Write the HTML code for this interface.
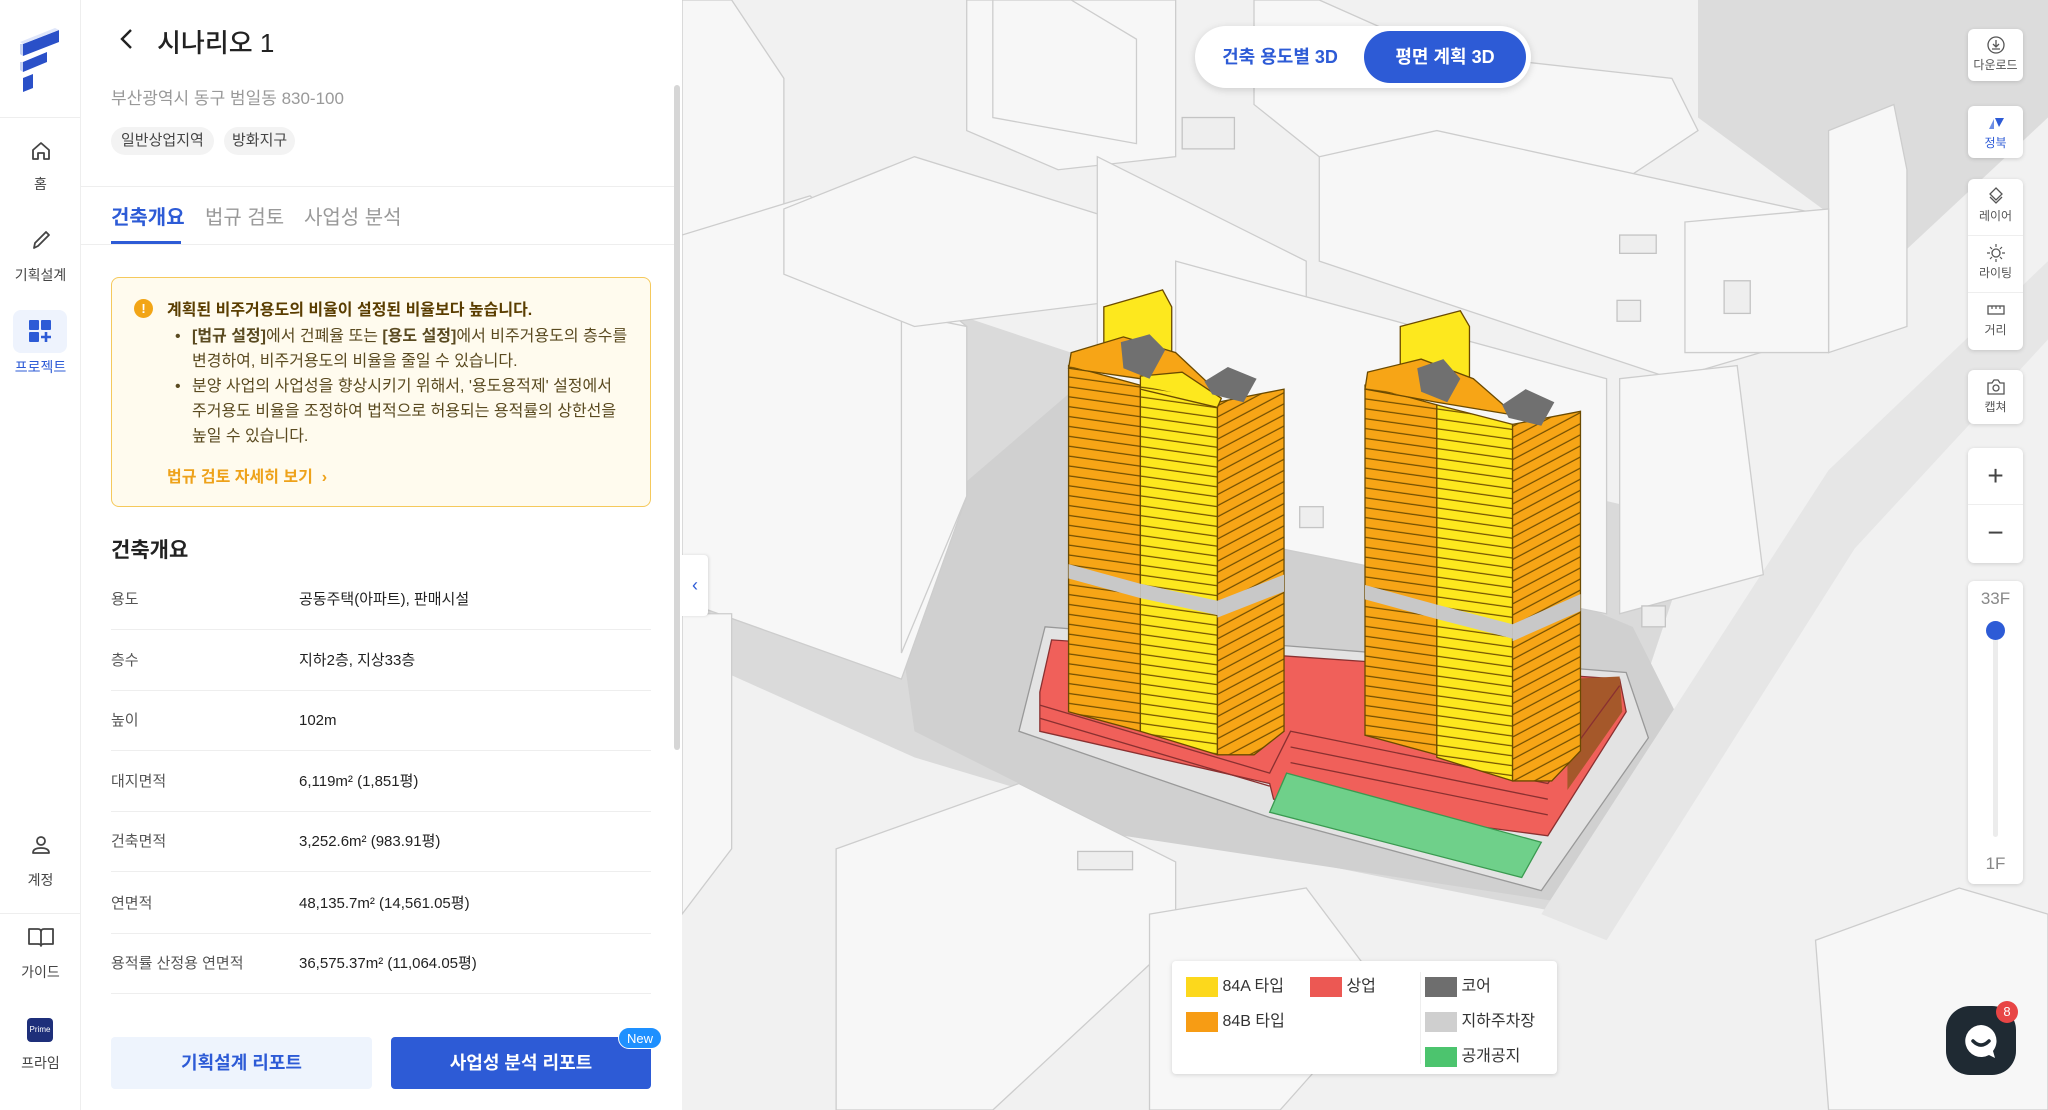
<!DOCTYPE html>
<html><head><meta charset="utf-8"><style>
*{box-sizing:border-box;margin:0;padding:0}
body{width:2048px;height:1110px;overflow:hidden;position:relative;font-family:"Liberation Sans","Noto Sans CJK KR",sans-serif;background:#fff;color:#222}
.abs{position:absolute}
.side{left:0;top:0;width:81px;height:1110px;background:#fff;border-right:1px solid #eee}
.nav{position:absolute;left:0;width:81px;text-align:center;font-size:14px;color:#444}
.panel{left:81px;top:0;width:601px;height:1110px;background:#fff}
.row{position:absolute;left:111px;width:540px;height:40px;border-bottom:1px solid #eee;font-size:15px}
.row .l{position:absolute;left:0;top:0;line-height:20px;color:#555}
.row .v{position:absolute;left:188px;top:0;line-height:20px;color:#222}
.tb{position:absolute;left:1968px;width:55px;background:#fff;border-radius:6px;box-shadow:0 1px 4px rgba(0,0,0,.15);text-align:center;font-size:12px;color:#555}
.leg{font-size:16px;color:#333}
.sw{display:inline-block;width:32px;height:20px;vertical-align:middle}
</style></head><body>

<!-- MAP -->
<svg class="abs" style="left:682px;top:0" width="1366" height="1110" viewBox="522 0 1046 850">
<rect x="522" y="0" width="1046" height="850" fill="#f1f1f1"/>
<polygon points="522,250 700,230 1000,330 1300,400 1200,700 900,640 700,580 522,500" fill="#dadada"/>
<polygon points="680,420 820,300 1250,480 1290,560 1190,690 860,640 700,560" fill="#d0d0d0"/>
<polygon points="1300,0 1568,0 1568,90 1450,200 1300,90" fill="#dcdcdc"/>
<polygon points="1180,700 1400,360 1568,200 1568,260 1420,420 1230,720" fill="#e6e6e6"/>
<g fill="#f7f7f7" stroke="#cdcdcd" stroke-width="1">
<polygon points="522,0 560,0 600,60 600,180 522,220"/>
<polygon points="522,180 620,150 740,250 740,380 690,520 522,460"/>
<polygon points="690,240 740,250 740,380 690,500"/>
<polygon points="600,160 700,120 860,170 860,230 700,250 600,210"/>
<polygon points="740,0 900,0 900,120 810,130 740,100"/>
<polygon points="960,0 1010,0 1100,40 1280,60 1300,100 1240,140 1010,120 960,80"/>
<polygon points="1010,120 1100,100 1420,170 1450,240 1280,290 1010,200"/>
<polygon points="840,120 1000,200 1000,350 860,380 840,300"/>
<polygon points="900,200 1230,290 1230,470 980,420 900,360"/>
<polygon points="1240,290 1330,280 1350,440 1240,470"/>
<polygon points="1400,100 1450,80 1460,130 1460,250 1400,270"/>
<polygon points="1290,170 1400,160 1400,270 1290,270"/>
<polygon points="522,470 560,470 560,650 522,700"/>
<polygon points="640,650 780,600 900,660 900,720 760,850 640,850"/>
<polygon points="880,700 1000,680 1060,760 980,850 880,850"/>
<polygon points="1390,720 1500,680 1568,700 1568,850 1400,850"/>
<polygon points="760,0 820,0 870,30 870,110 760,90"/>
</g>
<g fill="#eeeeee" stroke="#c4c4c4">
<rect x="1240" y="180" width="28" height="14"/><rect x="1238" y="230" width="18" height="16"/>
<rect x="1320" y="215" width="20" height="25"/><rect x="995" y="388" width="18" height="16"/>
<rect x="1257" y="464" width="18" height="16"/><rect x="825" y="652" width="42" height="14"/>
<rect x="905" y="90" width="40" height="24"/>
</g>
<polygon points="780,560 800,480 1245,515 1262,565 1180,682 972,626" fill="#e3e3e3" stroke="#999"/>
<polygon points="796,530 805,490 1240,520 1245,545 1185,640 975,612 972,600 796,560" fill="#f0605a" stroke="#8a3030" stroke-width="1"/>
<polygon points="1200,520 1240,518 1242,545 1200,605" fill="#a5582a"/>
<g stroke="#8a3030" stroke-width="1" fill="none">
<polyline points="796,540 972,592 988,560 1185,600 1240,525"/>
<polyline points="796,550 972,602"/><polyline points="988,572 1185,612"/><polyline points="988,584 1185,624"/>
</g>
<polygon points="985,592 1180,645 1165,672 972,622" fill="#6fd08a" stroke="#3a9a50"/>
<defs>
<pattern id="st" width="10" height="7.5" patternUnits="userSpaceOnUse" patternTransform="rotate(8)"><line x1="0" y1="7" x2="10" y2="7" stroke="#6b4a00" stroke-width="0.9"/></pattern>
<pattern id="st2" width="10" height="7.5" patternUnits="userSpaceOnUse" patternTransform="rotate(-28)"><line x1="0" y1="7" x2="10" y2="7" stroke="#6b4a00" stroke-width="0.9"/></pattern>
</defs>
<g stroke="#6b4a00" stroke-width="1">
<polygon points="818,280 873,295 873,560 818,545" fill="#f7a516"/>
<polygon points="873,295 932,308 932,578 873,560" fill="#fde81e"/>
<polygon points="932,308 983,298 983,560 960,578 932,578" fill="#f7a516"/>
<polygon points="845,235 890,222 897,235 897,290 845,275" fill="#fde81e"/>
<polygon points="820,270 860,258 900,270 932,300 873,290 818,282" fill="#f7a516"/>
<polygon points="873,288 905,285 935,305 932,312 873,298" fill="#fde81e"/>
</g>
<polygon points="818,280 873,295 873,560 818,545" fill="url(#st)"/>
<polygon points="873,295 932,308 932,578 873,560" fill="url(#st)"/>
<polygon points="932,308 983,298 983,560 960,578 932,578" fill="url(#st2)"/>
<polygon points="818,432 873,447 873,458 818,443" fill="#c8c8c8"/><polygon points="873,447 932,460 932,471 873,458" fill="#c8c8c8"/><polygon points="932,460 983,440 983,453 932,473" fill="#c8c8c8"/>
<polygon points="858,262 880,256 892,268 880,290 860,282" fill="#707070"/>
<polygon points="922,292 940,281 962,290 952,308 928,302" fill="#707070"/>
<g stroke="#6b4a00" stroke-width="1">
<polygon points="1045,295 1100,310 1100,578 1045,563" fill="#f7a516"/>
<polygon points="1100,310 1158,325 1158,598 1100,580" fill="#fde81e"/>
<polygon points="1158,325 1210,315 1210,575 1188,598 1158,598" fill="#f7a516"/>
<polygon points="1072,250 1118,238 1125,250 1125,305 1072,290" fill="#fde81e"/>
<polygon points="1047,285 1088,275 1128,290 1160,318 1100,308 1045,298" fill="#f7a516"/>
</g>
<polygon points="1045,295 1100,310 1100,578 1045,563" fill="url(#st)"/>
<polygon points="1100,310 1158,325 1158,598 1100,580" fill="url(#st)"/>
<polygon points="1158,325 1210,315 1210,575 1188,598 1158,598" fill="url(#st2)"/>
<polygon points="1045,448 1100,463 1100,474 1045,459" fill="#c8c8c8"/><polygon points="1100,463 1158,478 1158,489 1100,474" fill="#c8c8c8"/><polygon points="1158,478 1210,455 1210,468 1158,491" fill="#c8c8c8"/>
<polygon points="1085,282 1105,275 1118,290 1108,308 1088,300" fill="#707070"/>
<polygon points="1150,310 1168,298 1190,308 1180,326 1155,320" fill="#707070"/>
</svg>

<div class="abs" style="left:1195px;top:26px;width:336px;height:62px;background:#fff;border-radius:31px;box-shadow:0 2px 8px rgba(0,0,0,.15)"></div>
<div class="abs" style="left:1200px;top:31px;width:160px;height:52px;line-height:52px;text-align:center;font-size:18px;font-weight:bold;color:#2d5bd6">건축 용도별 3D</div>
<div class="abs" style="left:1364px;top:31px;width:162px;height:52px;line-height:52px;text-align:center;font-size:18px;font-weight:bold;color:#fff;background:#2d5bd6;border-radius:26px">평면 계획 3D</div>

<div class="tb" style="top:29px;height:52px"><svg width="22" height="22" viewBox="0 0 22 22" style="margin-top:5px"><circle cx="11" cy="11" r="8" fill="none" stroke="#555" stroke-width="1.3"/><path d="M11 6v7M8 10l3 3 3-3M7 15h8" stroke="#555" stroke-width="1.3" fill="none"/></svg><div style="margin-top:-3px">다운로드</div></div>
<div class="tb" style="top:106px;height:52px;color:#2d5bd6"><svg width="22" height="20" viewBox="0 0 22 20" style="margin-top:7px"><path d="M4 16L9 6V16Z" fill="#6e8fe6"/><path d="M10 5H19L14 14Z" fill="#2d5bd6"/></svg><div style="margin-top:-2px">정북</div></div>
<div class="tb" style="top:179px;height:171px">
<div style="height:57px;border-bottom:1px solid #eee"><svg width="22" height="22" viewBox="0 0 22 22" style="margin-top:6px"><path d="M11 3L17 9L11 15L5 9Z M5 12L11 18L17 12" fill="none" stroke="#555" stroke-width="1.3"/></svg><div style="margin-top:-3px">레이어</div></div>
<div style="height:57px;border-bottom:1px solid #eee"><svg width="22" height="22" viewBox="0 0 22 22" style="margin-top:6px"><circle cx="11" cy="11" r="4" fill="none" stroke="#555" stroke-width="1.3"/><path d="M11 2v3M11 17v3M2 11h3M17 11h3M5 5l2 2M15 15l2 2M17 5l-2 2M5 17l2-2" stroke="#555" stroke-width="1.2"/></svg><div style="margin-top:-3px">라이팅</div></div>
<div style="height:57px"><svg width="22" height="22" viewBox="0 0 22 22" style="margin-top:6px"><rect x="3" y="7" width="16" height="8" fill="none" stroke="#555" stroke-width="1.3"/><path d="M7 7v3M11 7v3M15 7v3" stroke="#555" stroke-width="1.2"/></svg><div style="margin-top:-3px">거리</div></div>
</div>
<div class="tb" style="top:370px;height:54px"><svg width="22" height="22" viewBox="0 0 22 22" style="margin-top:6px"><path d="M3 7h4l2-3h4l2 3h4v11H3Z" fill="none" stroke="#555" stroke-width="1.3"/><circle cx="11" cy="12" r="3" fill="none" stroke="#555" stroke-width="1.3"/></svg><div style="margin-top:-3px">캡쳐</div></div>
<div class="tb" style="top:448px;height:115px;font-size:28px;color:#444;font-weight:300"><div style="height:57px;line-height:55px;border-bottom:1px solid #eee">+</div><div style="line-height:55px">−</div></div>
<div class="tb" style="top:581px;height:303px;font-size:17px;color:#888"><div style="margin-top:8px">33F</div>
<div style="position:absolute;left:25px;top:46px;width:5px;height:210px;background:#ececec;border-radius:3px"></div>
<div style="position:absolute;left:18px;top:40px;width:19px;height:19px;background:#2d5bd6;border-radius:50%"></div>
<div style="position:absolute;left:0;width:55px;bottom:10px">1F</div></div>

<div class="abs" style="left:1172px;top:961px;width:385px;height:113px;background:#fff;border-radius:4px;box-shadow:0 1px 5px rgba(0,0,0,.15)"></div>
<div class="abs leg" style="left:1186px;top:972px"><span class="sw" style="background:#fcd81c"></span> 84A 타입</div>
<div class="abs leg" style="left:1310px;top:972px"><span class="sw" style="background:#ec5853"></span> 상업</div>
<div class="abs leg" style="left:1186px;top:1007px"><span class="sw" style="background:#f79c14"></span> 84B 타입</div>
<div class="abs" style="left:1420px;top:972px;width:1px;height:92px;background:#eee"></div>
<div class="abs leg" style="left:1425px;top:972px"><span class="sw" style="background:#6e6e6e"></span> 코어</div>
<div class="abs leg" style="left:1425px;top:1007px"><span class="sw" style="background:#cfcfcf"></span> 지하주차장</div>
<div class="abs leg" style="left:1425px;top:1042px"><span class="sw" style="background:#4cc46e"></span> 공개공지</div>

<div class="abs" style="left:1946px;top:1006px;width:70px;height:69px;background:#1f2a33;border-radius:24px"></div>
<svg class="abs" style="left:1960px;top:1020px" width="42" height="42" viewBox="0 0 42 42"><path d="M21 5a16 16 0 1 0 8 30l6 3-2-7A16 16 0 0 0 21 5Z" fill="#fff"/><path d="M13 21q8 8 16 0" stroke="#1f2a33" stroke-width="3.5" fill="none" stroke-linecap="round"/></svg>
<div class="abs" style="left:1996px;top:1001px;width:22px;height:22px;background:#e84545;border-radius:50%;color:#fff;font-size:13px;text-align:center;line-height:22px">8</div>

<div class="abs" style="left:682px;top:555px;width:26px;height:61px;background:#fff;border-radius:0 4px 4px 0;box-shadow:1px 0 3px rgba(0,0,0,.12);color:#2d5bd6;font-size:18px;line-height:61px;text-align:center">‹</div>

<!-- SIDEBAR -->
<div class="abs side">
<svg style="position:absolute;left:17px;top:26px" width="46" height="66" viewBox="0 0 46 66"><path d="M6 18L42 4V16L6 30Z" fill="#2a50c8"/><path d="M6 36L30 26V36L6 46Z" fill="#2a50c8"/><path d="M6 52L16 48V62L6 66Z" fill="#2a50c8"/><path d="M3 18L6 18V30L3 28Z M3 36h3v10L3 44Z" fill="#c7d3f3"/><path d="M6 18L42 4L38 2L3 16Z" fill="#dfe6fa"/></svg>
<div style="position:absolute;left:0;top:117px;width:81px;height:1px;background:#eee"></div>
<div class="nav" style="top:139px"><svg width="24" height="24" viewBox="0 0 24 24"><path d="M4 11L12 4L20 11V20H15V14H9V20H4Z" fill="none" stroke="#444" stroke-width="1.8" stroke-linejoin="round"/></svg><div style="margin-top:8px">홈</div></div>
<div class="nav" style="top:228px"><svg width="24" height="24" viewBox="0 0 24 24"><path d="M5 20L6 15L17 4L20 7L9 18Z" fill="none" stroke="#444" stroke-width="1.8" stroke-linejoin="round"/></svg><div style="margin-top:10px">기획설계</div></div>
<div style="position:absolute;left:13px;top:310px;width:54px;height:43px;background:#eef3fd;border-radius:8px"></div>
<svg style="position:absolute;left:28px;top:319px" width="25" height="25" viewBox="0 0 25 25"><rect x="1" y="1" width="10" height="10" rx="1" fill="#2d5bd6"/><rect x="13" y="1" width="10" height="10" rx="1" fill="#2d5bd6"/><rect x="1" y="13" width="10" height="10" rx="1" fill="#2d5bd6"/><path d="M18 13v10M13 18h10" stroke="#2d5bd6" stroke-width="2.6"/></svg>
<div class="nav" style="top:357px;color:#2d5bd6">프로젝트</div>
<div class="nav" style="top:833px"><svg width="24" height="24" viewBox="0 0 24 24"><circle cx="12" cy="8" r="4" fill="none" stroke="#444" stroke-width="1.8"/><path d="M4 20q0-5 8-5t8 5Z" fill="none" stroke="#444" stroke-width="1.8" stroke-linejoin="round"/></svg><div style="margin-top:10px">계정</div></div>
<div style="position:absolute;left:0;top:913px;width:81px;height:1px;background:#eee"></div>
<div class="nav" style="top:925px"><svg width="30" height="24" viewBox="0 0 30 24"><path d="M3 4h9q3 0 3 3v14q0-2-3-2H3Z M27 4h-9q-3 0-3 3v14q0-2 3-2h9Z" fill="none" stroke="#444" stroke-width="1.8" stroke-linejoin="round"/></svg><div style="margin-top:10px">가이드</div></div>
<div style="position:absolute;left:27px;top:1018px;width:26px;height:24px;background:#1e2f7a;border-radius:4px;color:#fff;font-size:8px;line-height:24px;text-align:center">Prime</div>
<div class="nav" style="top:1053px">프라임</div>
</div>

<!-- PANEL -->
<div class="abs panel"></div>
<svg class="abs" style="left:116px;top:27px" width="22" height="24" viewBox="0 0 22 24"><path d="M15 3L6 12L15 21" fill="none" stroke="#222" stroke-width="2.4"/></svg>
<div class="abs" style="left:157px;top:23px;font-size:26px;color:#222;font-weight:500">시나리오 1</div>
<div class="abs" style="left:111px;top:84px;font-size:17px;color:#999">부산광역시 동구 범일동 830-100</div>
<div class="abs" style="left:111px;top:127px;height:28px;padding:0 10px;line-height:28px;background:#f3f3f3;border-radius:14px;font-size:15px;color:#444">일반상업지역</div>
<div class="abs" style="left:224px;top:127px;height:28px;padding:0 8px;line-height:28px;background:#f3f3f3;border-radius:14px;font-size:15px;color:#444">방화지구</div>
<div class="abs" style="left:81px;top:186px;width:594px;height:1px;background:#eee"></div>
<div class="abs" style="left:111px;top:201px;font-size:20px;color:#2d5bd6;font-weight:bold">건축개요</div>
<div class="abs" style="left:205px;top:201px;font-size:20px;color:#999">법규 검토</div>
<div class="abs" style="left:304px;top:201px;font-size:20px;color:#999">사업성 분석</div>
<div class="abs" style="left:111px;top:241px;width:70px;height:3px;background:#2d5bd6"></div>
<div class="abs" style="left:81px;top:244px;width:594px;height:1px;background:#eee"></div>

<div class="abs" style="left:111px;top:277px;width:540px;height:230px;background:#fffbee;border:1.5px solid #f5c95c;border-radius:8px"></div>
<div class="abs" style="left:134px;top:299px;width:19px;height:19px;background:#f2a516;border-radius:50%;color:#fff;font-size:13px;font-weight:bold;text-align:center;line-height:19px">!</div>
<div class="abs" style="left:167px;top:296px;font-size:16px;font-weight:bold;color:#5a3d00">계획된 비주거용도의 비율이 설정된 비율보다 높습니다.</div>
<div class="abs" style="left:172px;top:324px;width:465px;font-size:16px;line-height:25px;color:#5a4a20;word-break:keep-all">
<div style="position:relative;padding-left:20px"><span style="position:absolute;left:3px">•</span><b>[법규 설정]</b>에서 건폐율 또는 <b>[용도 설정]</b>에서 비주거용도의 층수를 변경하여, 비주거용도의 비율을 줄일 수 있습니다.</div>
<div style="position:relative;padding-left:20px"><span style="position:absolute;left:3px">•</span>분양 사업의 사업성을 향상시키기 위해서, '용도용적제' 설정에서 주거용도 비율을 조정하여 법적으로 허용되는 용적률의 상한선을 높일 수 있습니다.</div>
</div>
<div class="abs" style="left:167px;top:463px;font-size:16px;color:#eea21a;font-weight:bold">법규 검토 자세히 보기 &nbsp;›</div>

<div class="abs" style="left:111px;top:534px;font-size:21px;font-weight:bold;color:#222">건축개요</div>
<div class="row" style="top:590px"><span class="l">용도</span><span class="v">공동주택(아파트), 판매시설</span></div>
<div class="row" style="top:651px"><span class="l">층수</span><span class="v">지하2층, 지상33층</span></div>
<div class="row" style="top:711px"><span class="l">높이</span><span class="v">102m</span></div>
<div class="row" style="top:772px"><span class="l">대지면적</span><span class="v">6,119m² (1,851평)</span></div>
<div class="row" style="top:832px"><span class="l">건축면적</span><span class="v">3,252.6m² (983.91평)</span></div>
<div class="row" style="top:894px"><span class="l">연면적</span><span class="v">48,135.7m² (14,561.05평)</span></div>
<div class="row" style="top:954px"><span class="l">용적률 산정용 연면적</span><span class="v">36,575.37m² (11,064.05평)</span></div>

<div class="abs" style="left:111px;top:1037px;width:261px;height:52px;background:#eef4fd;border-radius:4px;color:#2d5bd6;font-size:18px;font-weight:bold;text-align:center;line-height:52px">기획설계 리포트</div>
<div class="abs" style="left:391px;top:1037px;width:260px;height:52px;background:#2d5bd6;border-radius:4px;color:#fff;font-size:18px;font-weight:bold;text-align:center;line-height:52px">사업성 분석 리포트</div>
<div class="abs" style="left:618px;top:1027px;width:44px;height:22px;background:#1e90ff;border-radius:11px;color:#fff;font-size:13px;text-align:center;line-height:22px;border:1px solid #fff">New</div>
<div class="abs" style="left:674px;top:85px;width:6px;height:665px;background:#d6d6d6;border-radius:3px"></div>
</body></html>
